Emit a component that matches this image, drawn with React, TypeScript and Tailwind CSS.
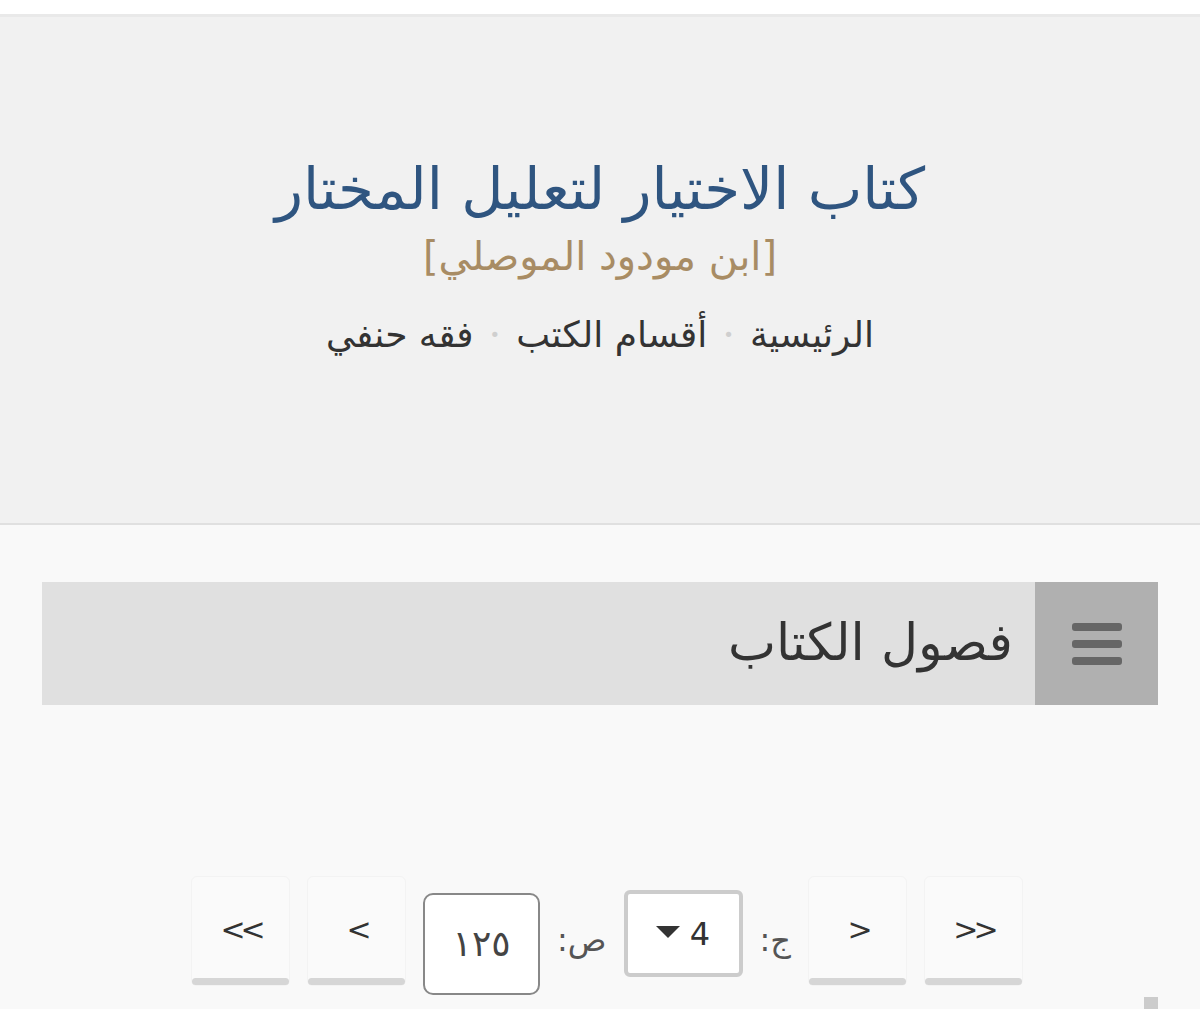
import React from "react";

function NavButton({ label }: { label: string }) {
  return (
    <button className="flex h-[110px] w-[99px] flex-col items-center justify-between rounded-[6px] border border-[#f3f3f3] bg-[#fafafa] pt-[38px] text-[30px] leading-none tracking-[-5px] text-[#333]">
      <span dir="ltr" className="pl-[-5px]">{label}</span>
      <span className="block h-[7px] w-full rounded-full bg-[#d6d6d6]" />
    </button>
  );
}

export default function App() {
  return (
    <div
      dir="rtl"
      className="min-h-screen bg-[#f9f9f9] font-['DejaVu_Sans',sans-serif]"
    >
      <div className="h-[17px] border-b-[3px] border-[#e9e9e9] bg-white" />

      <header className="flex h-[508px] flex-col items-center border-b-2 border-[#e0e0e0] bg-[#f1f1f1] pt-[135px]">
        <h1 className="text-[58px] leading-[74px] text-[#2f5580]">
          كتاب الاختيار لتعليل المختار
        </h1>
        <div className="mt-[4px] text-[40px] leading-[52px] text-[#a88c64]">
          [ابن مودود الموصلي]
        </div>
        <nav className="mt-[27px] flex items-center gap-[16px] text-[36px] leading-[52px] text-[#333]">
          <a>الرئيسية</a>
          <span className="text-[18px] text-[#cfcfcf]">•</span>
          <a>أقسام الكتب</a>
          <span className="text-[18px] text-[#cfcfcf]">•</span>
          <a>فقه حنفي</a>
        </nav>
      </header>

      <main className="px-[42px] pt-[57px]">
        <div className="flex h-[123px] items-stretch bg-[#e0e0e0]">
          <div className="flex w-[123px] items-center justify-center bg-[#b0b0b0]">
            <div className="flex w-[50px] flex-col gap-[9px]">
              <span className="h-[8px] rounded-[3px] bg-[#666]" />
              <span className="h-[8px] rounded-[3px] bg-[#666]" />
              <span className="h-[8px] rounded-[3px] bg-[#666]" />
            </div>
          </div>
          <h2 className="flex items-center pr-[22px] text-[51px] text-[#333]">
            فصول الكتاب
          </h2>
        </div>

        <div className="mt-[171px] flex items-start justify-center gap-[17px] pl-[14px]">
          <NavButton label=">>" />
          <NavButton label=">" />
          <span className="mt-[40px] text-[32px] text-[#555]">ج:</span>
          <div className="mt-[14px] flex h-[87px] w-[119px] items-center justify-center gap-[10px] rounded-[6px] border-4 border-[#cccccc] bg-white text-[32px] text-[#333]">
            <span>4</span>
            <svg width="24" height="12" viewBox="0 0 24 12" className="mt-[-4px]">
              <path d="M0 0h24L12 12z" fill="#333" />
            </svg>
          </div>
          <span className="mt-[40px] text-[32px] text-[#555]">ص:</span>
          <div className="mt-[17px] flex h-[102px] w-[117px] items-center justify-center rounded-[10px] border-2 border-[#888] bg-white text-[36px] text-[#444]">
            ١٢٥
          </div>
          <NavButton label="<" />
          <NavButton label="<<" />
        </div>

        <div className="mt-[2px] flex">
          <span className="h-[14px] w-[14px] bg-[#cccccc]" />
        </div>
      </main>
    </div>
  );
}
